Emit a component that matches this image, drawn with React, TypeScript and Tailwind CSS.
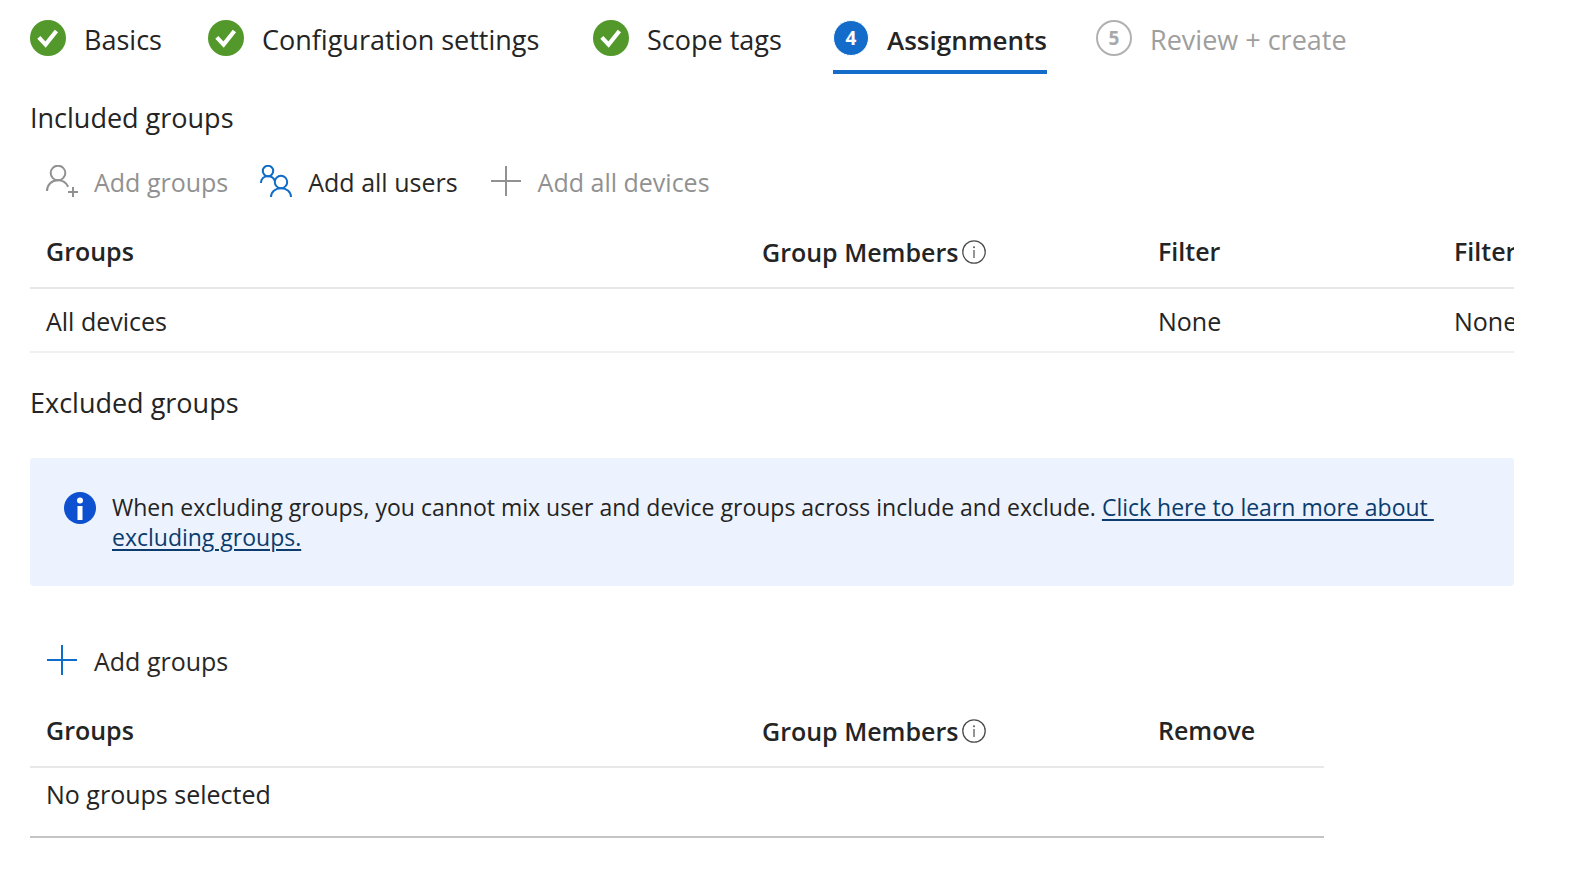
import { ReactNode } from "react";

type StepState = "done" | "active" | "pending";

type Step = {
  label: string;
  state: StepState;
  slot: string;
};

const STEPS: Step[] = [
  { label: "Basics", state: "done", slot: "w-[178px]" },
  { label: "Configuration settings", state: "done", slot: "w-[385px]" },
  { label: "Scope tags", state: "done", slot: "w-[240px]" },
  { label: "Assignments", state: "active", slot: "w-[263px]" },
  { label: "Review + create", state: "pending", slot: "" },
];

function StepBadge({ state, number }: { state: StepState; number: number }) {
  if (state === "done") {
    return (
      <svg viewBox="0 0 36 36" className="size-9 shrink-0" aria-hidden="true">
        <circle cx="18" cy="18" r="18" fill="#52982a" />
        <path
          d="M8.800 17.400 L15.600 24.600 L26.400 11"
          fill="none"
          stroke="#fff"
          strokeWidth="4.200"
          strokeLinejoin="miter"
        />
      </svg>
    );
  }

  return (
    <span
      className={
        state === "active"
          ? "flex size-9 shrink-0 items-center justify-center rounded-full border border-white bg-[#146cca] text-[19px] font-bold text-white"
          : "flex size-9 shrink-0 items-center justify-center rounded-full border-2 border-[#b1b1b1] text-[19px] font-bold text-[#a8a8a8]"
      }
    >
      {number}
    </span>
  );
}

function PlusIcon() {
  return (
    <svg viewBox="0 0 32 32" className="size-8 shrink-0" aria-hidden="true">
      <path d="M16 1v30M1 16h30" fill="none" stroke="currentColor" strokeWidth="2" />
    </svg>
  );
}

function AddUserIcon() {
  return (
    <svg viewBox="0 0 32 32" className="size-8 shrink-0" aria-hidden="true">
      <g fill="none" stroke="currentColor" strokeWidth="2">
        <circle cx="12" cy="8" r="7.300" />
        <path d="M1 26c0-6.500 4.800-10.700 11-10.700c4.600 0 8.300 2.600 10.200 6.500M27 22v10M22 27h10" />
      </g>
    </svg>
  );
}

function UsersIcon() {
  return (
    <svg viewBox="0 0 32 32" className="size-8 shrink-0" aria-hidden="true">
      <g fill="none" stroke="currentColor" strokeWidth="2">
        <circle cx="8" cy="6" r="5.200" />
        <circle cx="21" cy="17" r="6.200" />
        <path d="M1 18c0-4.200 2.900-6.800 7-6.800c3.400 0 6 1.800 6.800 4.800M11 32c0-5.200 4.200-8.800 10-8.800s10 3.600 10 8.800" />
      </g>
    </svg>
  );
}

function InfoOutlineIcon() {
  return (
    <svg viewBox="0 0 24 24" className="size-6 shrink-0" aria-hidden="true">
      <circle cx="12" cy="12" r="11.200" fill="none" stroke="#4d4d4d" strokeWidth="1.300" />
      <path d="M12 10v8" stroke="#5c5c5c" strokeWidth="1.300" />
      <circle cx="12" cy="7.300" r="1" fill="#5c5c5c" />
    </svg>
  );
}

function InfoSolidIcon() {
  return (
    <svg viewBox="0 0 32 32" className="size-8 shrink-0" aria-hidden="true">
      <circle cx="16" cy="16" r="16" fill="#0d50d0" />
      <circle cx="16" cy="8.500" r="3" fill="#fff" />
      <rect x="13.500" y="14" width="5" height="14" fill="#fff" />
    </svg>
  );
}

type CommandProps = {
  icon: ReactNode;
  label: string;
  disabled?: boolean;
};

function Command({ icon, label, disabled = false }: CommandProps) {
  return (
    <button
      type="button"
      disabled={disabled}
      className="flex items-center gap-4 text-[#0f6cc8] disabled:text-[#919191]"
    >
      {icon}
      <span className={disabled ? "pt-0.5" : "pt-0.5 text-[#292827]"}>{label}</span>
    </button>
  );
}

function MembersHeading() {
  return (
    <span className="flex items-center gap-1 pt-0.5">
      Group Members
      <InfoOutlineIcon />
    </span>
  );
}

export default function App() {
  return (
    <main className="bg-white pt-4 pr-[60px] pb-12 pl-[30px] font-['Open_Sans','Segoe_UI',sans-serif] text-[25px] leading-8 text-[#242424]">
      {/* Wizard steps */}
      <nav aria-label="Steps">
        <ol className="flex text-[27px]">
          {STEPS.map((step, index) => (
            <li key={step.label} className={step.slot}>
              <a
                href="#"
                aria-current={step.state === "active" ? "step" : undefined}
                className={
                  step.state === "active"
                    ? "inline-flex h-[58px] items-start gap-[18px] border-b-4 border-[#146cca] pt-1 text-[26px] font-semibold whitespace-nowrap"
                    : step.state === "pending"
                      ? "inline-flex h-[58px] items-start gap-[18px] pt-1 whitespace-nowrap text-[#9e9e9e]"
                      : "inline-flex h-[58px] items-start gap-[18px] pt-1 whitespace-nowrap"
                }
              >
                <StepBadge state={step.state} number={index + 1} />
                <span className="pt-1">{step.label}</span>
              </a>
            </li>
          ))}
        </ol>
      </nav>

      {/* Included groups */}
      <section>
        <h2 className="mt-7 text-[27px]">Included groups</h2>
        <div className="mt-[30px] flex gap-8 pl-4">
          <Command icon={<AddUserIcon />} label="Add groups" disabled />
          <Command icon={<UsersIcon />} label="Add all users" />
          <Command icon={<PlusIcon />} label="Add all devices" disabled />
        </div>

        <div className="mt-4 overflow-hidden">
          <table className="w-full table-fixed text-left whitespace-nowrap">
            <thead>
              <tr className="h-[74px] border-b-2 border-[#e8e8e8]">
                <th className="w-[716px] pl-4 font-semibold">Groups</th>
                <th className="w-[396px] pl-4 font-semibold">
                  <MembersHeading />
                </th>
                <th className="w-[296px] pl-4 font-semibold">Filter</th>
                <th className="pl-4 font-semibold">Filter</th>
              </tr>
            </thead>
            <tbody>
              <tr className="h-16 border-b-2 border-[#f0f0f0]">
                <td className="pt-0.5 pl-4">All devices</td>
                <td />
                <td className="pt-0.5 pl-4">None</td>
                <td className="pt-0.5 pl-4">None</td>
              </tr>
            </tbody>
          </table>
        </div>
      </section>

      {/* Excluded groups */}
      <section>
        <h2 className="mt-[34px] text-[27px]">Excluded groups</h2>

        <div className="mt-[39px] flex gap-4 rounded bg-[#ecf3fe] px-[34px] py-[34px] text-[23px] leading-[30px]">
          <InfoSolidIcon />
          <p className="max-w-[1340px]">
            When excluding groups, you cannot mix user and device groups across
            include and exclude.{" "}
            <a
              href="#"
              className="whitespace-break-spaces text-[#0b3c6d] underline decoration-2 underline-offset-3"
            >
              Click here to learn more about excluding groups.
            </a>
          </p>
        </div>

        <div className="mt-[57px] flex pl-4">
          <Command icon={<PlusIcon />} label="Add groups" />
        </div>

        <table className="mt-4 table-fixed text-left whitespace-nowrap">
          <thead>
            <tr className="h-[74px] border-b-2 border-[#e8e8e8]">
              <th className="w-[716px] pl-4 font-semibold">Groups</th>
              <th className="w-[396px] pl-4 font-semibold">
                <MembersHeading />
              </th>
              <th className="w-[182px] pl-4 font-semibold">Remove</th>
            </tr>
          </thead>
          <tbody>
            <tr className="h-[70px] border-b-2 border-[#c4c4c4]">
              <td colSpan={3} className="pb-4 pl-4">
                No groups selected
              </td>
            </tr>
          </tbody>
        </table>
      </section>
    </main>
  );
}
